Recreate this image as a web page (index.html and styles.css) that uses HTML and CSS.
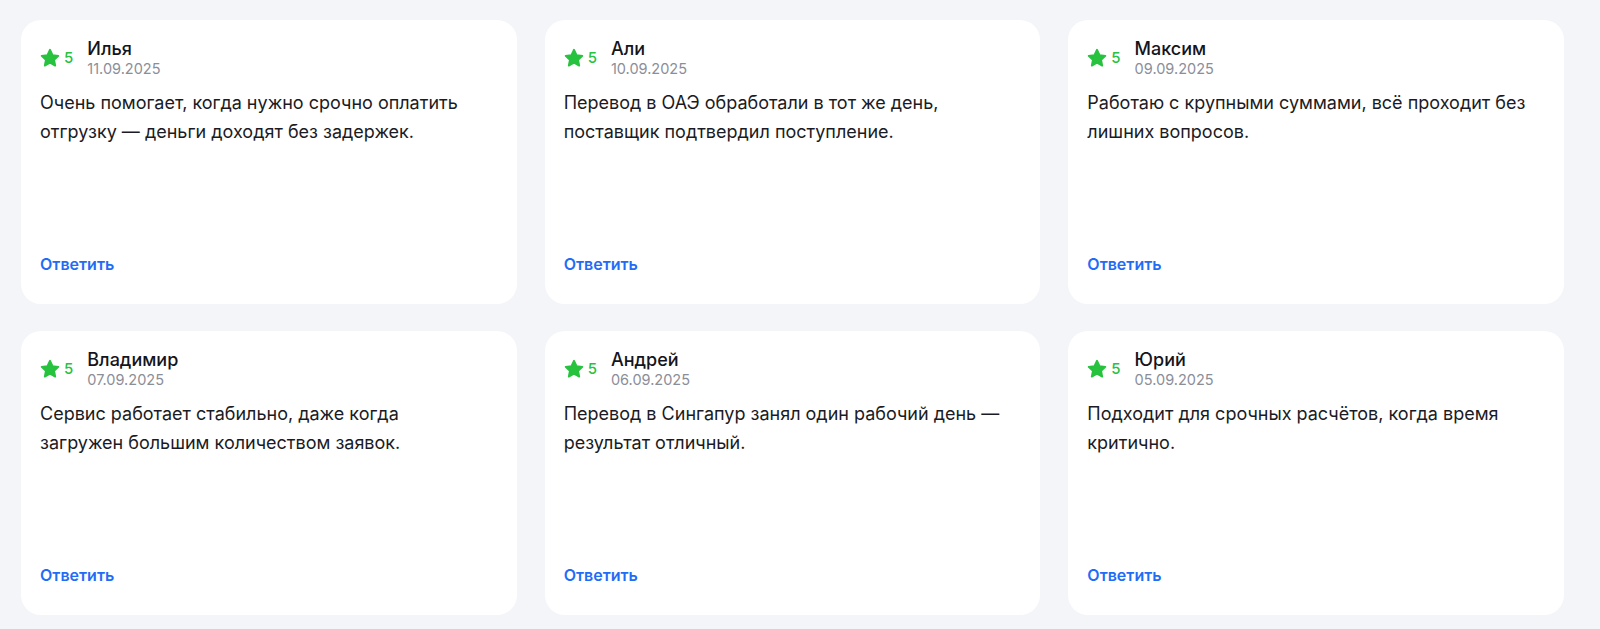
FILE: index.html
```html
<!DOCTYPE html>
<html lang="ru">
<head>
<meta charset="utf-8">
<title>Отзывы</title>
<link rel="stylesheet" href="styles.css">
</head>
<body>
<main class="reviews">
  <article class="card">
    <header class="head">
      <div class="rating"><svg class="star" viewBox="0 0 24 24"><path d="M12 3l2.8 5.8 6.3.8-4.6 4.4 1.2 6.3L12 17.2l-5.7 3.1 1.2-6.3L2.9 9.6l6.3-.8z"/></svg><span class="score">5</span></div>
      <div class="who"><div class="name">Илья</div><div class="date">11.09.2025</div></div>
    </header>
    <p class="text">Очень помогает, когда нужно срочно оплатить отгрузку — деньги доходят без задержек.</p>
    <a class="reply" href="#">Ответить</a>
  </article>
  <article class="card">
    <header class="head">
      <div class="rating"><svg class="star" viewBox="0 0 24 24"><path d="M12 3l2.8 5.8 6.3.8-4.6 4.4 1.2 6.3L12 17.2l-5.7 3.1 1.2-6.3L2.9 9.6l6.3-.8z"/></svg><span class="score">5</span></div>
      <div class="who"><div class="name">Али</div><div class="date">10.09.2025</div></div>
    </header>
    <p class="text">Перевод в ОАЭ обработали в тот же день, поставщик подтвердил поступление.</p>
    <a class="reply" href="#">Ответить</a>
  </article>
  <article class="card">
    <header class="head">
      <div class="rating"><svg class="star" viewBox="0 0 24 24"><path d="M12 3l2.8 5.8 6.3.8-4.6 4.4 1.2 6.3L12 17.2l-5.7 3.1 1.2-6.3L2.9 9.6l6.3-.8z"/></svg><span class="score">5</span></div>
      <div class="who"><div class="name">Максим</div><div class="date">09.09.2025</div></div>
    </header>
    <p class="text">Работаю с крупными суммами, всё проходит без лишних вопросов.</p>
    <a class="reply" href="#">Ответить</a>
  </article>
  <article class="card">
    <header class="head">
      <div class="rating"><svg class="star" viewBox="0 0 24 24"><path d="M12 3l2.8 5.8 6.3.8-4.6 4.4 1.2 6.3L12 17.2l-5.7 3.1 1.2-6.3L2.9 9.6l6.3-.8z"/></svg><span class="score">5</span></div>
      <div class="who"><div class="name">Владимир</div><div class="date">07.09.2025</div></div>
    </header>
    <p class="text">Сервис работает стабильно, даже когда загружен большим количеством заявок.</p>
    <a class="reply" href="#">Ответить</a>
  </article>
  <article class="card">
    <header class="head">
      <div class="rating"><svg class="star" viewBox="0 0 24 24"><path d="M12 3l2.8 5.8 6.3.8-4.6 4.4 1.2 6.3L12 17.2l-5.7 3.1 1.2-6.3L2.9 9.6l6.3-.8z"/></svg><span class="score">5</span></div>
      <div class="who"><div class="name">Андрей</div><div class="date">06.09.2025</div></div>
    </header>
    <p class="text">Перевод в Сингапур занял один рабочий день — результат отличный.</p>
    <a class="reply" href="#">Ответить</a>
  </article>
  <article class="card">
    <header class="head">
      <div class="rating"><svg class="star" viewBox="0 0 24 24"><path d="M12 3l2.8 5.8 6.3.8-4.6 4.4 1.2 6.3L12 17.2l-5.7 3.1 1.2-6.3L2.9 9.6l6.3-.8z"/></svg><span class="score">5</span></div>
      <div class="who"><div class="name">Юрий</div><div class="date">05.09.2025</div></div>
    </header>
    <p class="text">Подходит для срочных расчётов, когда время критично.</p>
    <a class="reply" href="#">Ответить</a>
  </article>
</main>
</body>
</html>
```

FILE: styles.css
```css
* { box-sizing: border-box; }

html, body {
  margin: 0;
  padding: 0;
  background: #f4f5f9;
  font-family: Inter, "Noto Sans", "DejaVu Sans", sans-serif;
  color: #1a1b24;
}

.reviews {
  display: grid;
  grid-template-columns: repeat(3, 1fr);
  grid-auto-rows: 284px;
  gap: 27px 28px;
  padding: 20px 36px 0 21px;
}

.card {
  background: #ffffff;
  border-radius: 20px;
  padding: 18px 20px 30px 18px;
  display: flex;
  flex-direction: column;
}

.head {
  display: flex;
  align-items: center;
  gap: 14px;
}

.rating {
  display: flex;
  align-items: center;
  gap: 3px;
}

.star {
  width: 22px;
  height: 22px;
  display: block;
}

.star path {
  fill: #27c23e;
  stroke: #27c23e;
  stroke-width: 2;
  stroke-linejoin: round;
}

.score {
  font-size: 15px;
  line-height: 18px;
  color: #27c23e;
  font-weight: 500;
}

.who {
  display: flex;
  flex-direction: column;
}

.name {
  font-size: 18px;
  line-height: 22px;
  font-weight: 500;
  color: #14151c;
}

.date {
  font-size: 14.5px;
  line-height: 18px;
  color: #8b8e99;
}

.text {
  margin: 10px 0 0 1px;
  font-size: 18px;
  line-height: 29px;
  color: #1a1b24;
  max-width: 440px;
}

.reply {
  margin-top: auto;
  margin-left: 1px;
  font-size: 16px;
  line-height: 20px;
  font-weight: 600;
  color: #1f6cf6;
  text-decoration: none;
  align-self: flex-start;
}
```
